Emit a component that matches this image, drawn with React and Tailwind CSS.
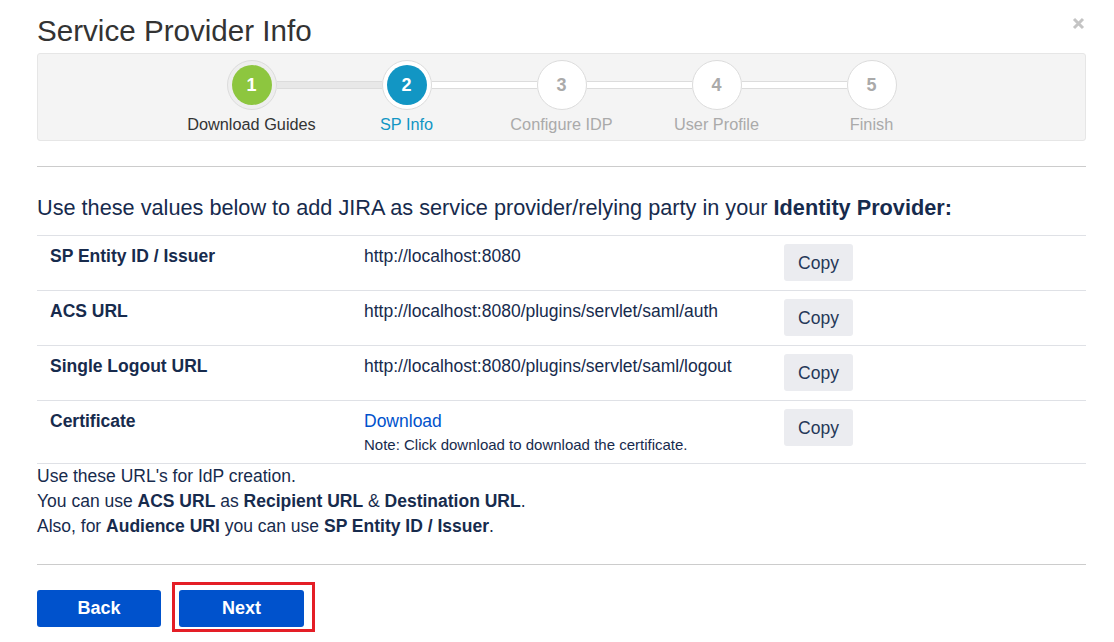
import React from "react";

const steps = [
  { n: 1, label: "Download Guides", state: "done" },
  { n: 2, label: "SP Info", state: "active" },
  { n: 3, label: "Configure IDP", state: "todo" },
  { n: 4, label: "User Profile", state: "todo" },
  { n: 5, label: "Finish", state: "todo" },
];

function Seg({ visible, filled }) {
  if (!visible) return <div className="flex-1" />;
  return (
    <div
      className={
        "flex-1 h-[8px] border-y border-[#dcdcdc] " +
        (filled ? "bg-[#e8e8e8]" : "bg-white")
      }
    />
  );
}

function Circle({ n, state }) {
  if (state === "done")
    return (
      <div className="w-[50px] h-[50px] rounded-full border border-[#dcdcdc] bg-[#eeeeee] flex items-center justify-center shrink-0">
        <div className="w-[40px] h-[40px] rounded-full bg-[#8dc63f] text-white font-bold text-[18px] flex items-center justify-center">
          {n}
        </div>
      </div>
    );
  if (state === "active")
    return (
      <div className="w-[50px] h-[50px] rounded-full border border-[#dcdcdc] bg-white flex items-center justify-center shrink-0">
        <div className="w-[40px] h-[40px] rounded-full bg-[#1296c4] text-white font-bold text-[18px] flex items-center justify-center">
          {n}
        </div>
      </div>
    );
  return (
    <div className="w-[50px] h-[50px] rounded-full border border-[#dcdcdc] bg-white flex items-center justify-center shrink-0 text-[#aaaaaa] font-bold text-[18px]">
      {n}
    </div>
  );
}

const labelColor = {
  done: "text-[#333333]",
  active: "text-[#1296c4]",
  todo: "text-[#aaaaaa]",
};

function CopyBtn() {
  return (
    <button className="w-[69px] h-[37px] rounded-[3px] bg-[#ebecf0] text-[#253858] text-[17.5px] leading-[22px]">
      Copy
    </button>
  );
}

function Row({ label, children, tall }) {
  return (
    <div className={"flex border-t border-[#dfe1e6] " + (tall ? "h-[63px]" : "h-[55px]")}>
      <div className="w-[327px] pl-[13px] pt-[9px] font-bold text-[17.5px] leading-[22px] text-[#172b4d]">
        {label}
      </div>
      <div className="w-[420px] pt-[9px] text-[17.5px] leading-[22px] text-[#172b4d]">
        {children}
      </div>
      <div className="flex-1 pt-[8px]">
        <CopyBtn />
      </div>
    </div>
  );
}

export default function App() {
  return (
    <div className="relative w-[1114px] h-[642px] bg-white pl-[37px] pr-[28px] font-['Liberation_Sans',Arial,sans-serif]">
      <svg
        className="absolute left-[1072px] top-[17px]"
        width="13"
        height="13"
        viewBox="0 0 13 13"
      >
        <path d="M2 2 L11 11 M11 2 L2 11" stroke="#c4c4c4" strokeWidth="3" strokeLinecap="butt" />
      </svg>

      <h2 className="pt-[14px] text-[29.6px] leading-[34px] text-[#333333]">
        Service Provider Info
      </h2>

      <div className="mt-[5px] h-[88px] bg-[#f4f4f4] border border-[#e6e6e6] rounded-[3px] flex justify-center pt-[6px]">
        <div className="flex">
          {steps.map((s, i) => (
            <div key={s.n} className="w-[155px] flex flex-col items-center">
              <div className="w-full flex items-center">
                <Seg visible={i > 0} filled={i === 1} />
                <Circle n={s.n} state={s.state} />
                <Seg visible={i < steps.length - 1} filled={i === 0} />
              </div>
              <div className={"mt-[5px] text-[16.3px] leading-[18px] " + labelColor[s.state]}>
                {s.label}
              </div>
            </div>
          ))}
        </div>
      </div>

      <div className="mt-[25px] border-t border-[#cccccc]" />

      <p className="mt-[28px] text-[21.7px] leading-[26px] text-[#172b4d]">
        Use these values below to add JIRA as service provider/relying party in your{" "}
        <b>Identity Provider:</b>
      </p>

      <div className="mt-[14px] border-b border-[#dfe1e6]">
        <Row label="SP Entity ID / Issuer">http://localhost:8080</Row>
        <Row label="ACS URL">http://localhost:8080/plugins/servlet/saml/auth</Row>
        <Row label="Single Logout URL">http://localhost:8080/plugins/servlet/saml/logout</Row>
        <Row label="Certificate" tall>
          <div className="text-[#0052cc]">Download</div>
          <div className="mt-[3px] text-[15px] leading-[20px] text-[#172b4d]">
            Note: Click download to download the certificate.
          </div>
        </Row>
      </div>

      <div className="text-[17.5px] leading-[25px] text-[#172b4d]">
        <div>Use these URL's for IdP creation.</div>
        <div>
          You can use <b>ACS URL</b> as <b>Recipient URL</b> &amp; <b>Destination URL</b>.
        </div>
        <div>
          Also, for <b>Audience URI</b> you can use <b>SP Entity ID / Issuer</b>.
        </div>
      </div>

      <div className="mt-[25px] border-t border-[#cccccc]" />

      <div className="mt-[17px] flex items-start gap-[11px]">
        <button className="mt-[8px] w-[124px] h-[37px] rounded-[3px] bg-[#0052cc] text-white font-bold text-[18px]">
          Back
        </button>
        <div className="border-[3px] border-[#e41e26] pl-[4px] pr-[8px] pt-[5px] pb-[2px]">
          <button className="w-[125px] h-[37px] rounded-[3px] bg-[#0052cc] text-white font-bold text-[18px]">
            Next
          </button>
        </div>
      </div>
    </div>
  );
}
